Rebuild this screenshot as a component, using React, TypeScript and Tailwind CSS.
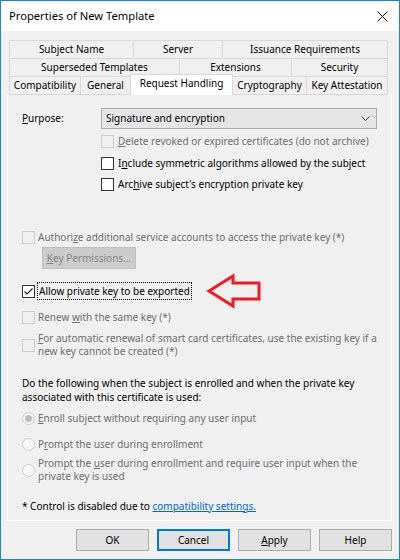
import React from 'react';

const font = { fontFamily: '"Noto Sans", "Open Sans", sans-serif' };

function Box({ disabled, checked }: { disabled?: boolean; checked?: boolean }) {
  return (
    <span
      className={`flex h-[13px] w-[13px] shrink-0 items-center justify-center border ${
        disabled ? 'border-[#cccccc] bg-[#f0f0f0]' : 'border-[#333333] bg-white'
      }`}
    >
      {checked && (
        <svg width="11" height="11" viewBox="0 0 11 11">
          <path d="M1.5 5.5 L4 8 L9.5 2.5" fill="none" stroke="#222" strokeWidth="1.2" />
        </svg>
      )}
    </span>
  );
}

function Radio({ selected }: { selected?: boolean }) {
  return (
    <span className="flex h-[13px] w-[13px] shrink-0 items-center justify-center rounded-full border border-[#cccccc] bg-[#f7f7f7]">
      {selected && <span className="h-[7px] w-[7px] rounded-full bg-[#bcbcbc]" />}
    </span>
  );
}

function Tab({ w, children, last }: { w: string; children: React.ReactNode; last?: boolean }) {
  return (
    <div
      className={`${w} flex h-[19px] items-center justify-center whitespace-nowrap border border-[#d9d9d9] bg-[#f0f0f0] ${
        last ? '' : '-mr-px'
      }`}
    >
      {children}
    </div>
  );
}

export default function App() {
  const dis = 'text-[#6d6d6d]';
  return (
    <div
      className="flex h-[560px] w-[400px] flex-col whitespace-nowrap border border-[#1883d7] bg-[#f0f0f0] text-[10px] text-black"
      style={font}
    >
      {/* title bar */}
      <div className="flex h-[30px] items-center justify-between bg-white pl-[8px] pr-[11px]">
        <span className="text-[11.2px]">Properties of New Template</span>
        <svg width="11" height="11" viewBox="0 0 11 11">
          <path d="M0.5 0.5 L10.5 10.5 M10.5 0.5 L0.5 10.5" stroke="#111" strokeWidth="1" />
        </svg>
      </div>

      <div className="flex flex-1 flex-col pl-[6px] pt-[9px]">
        {/* tabs */}
        <div className="ml-[2px] flex">
          <Tab w="w-[125px]">Subject Name</Tab>
          <Tab w="w-[90px]">Server</Tab>
          <Tab w="w-[166px]" last>Issuance Requirements</Tab>
        </div>
        <div className="-mt-px ml-[2px] flex">
          <Tab w="w-[171px]">Superseded Templates</Tab>
          <Tab w="w-[113px]">Extensions</Tab>
          <Tab w="w-[97px]" last>Security</Tab>
        </div>
        <div className="relative z-10 -mt-[3px] ml-[2px] flex items-end">
          <Tab w="w-[72px]">Compatibility</Tab>
          <Tab w="w-[51px]">General</Tab>
          <div className="-mr-px flex h-[21px] w-[103px] items-start justify-center border border-b-0 border-[#d9d9d9] bg-white pt-[1px]">
            Request Handling
          </div>
          <Tab w="w-[75px]">Cryptography</Tab>
          <Tab w="w-[82px]" last>Key Attestation</Tab>
        </div>

        {/* panel */}
        <div className="-mt-px flex h-[427px] w-[385px] flex-col border border-white pl-[14px]">
          <div className="mt-[13px] flex h-[21px] items-center">
            <span className="w-[79px]">
              <span className="underline">P</span>urpose:
            </span>
            <div className="flex h-[21px] w-[276px] items-center justify-between border border-[#adadad] bg-[#e5e5e5] pl-[4px] pr-[6px]">
              <span>Signature and encryption</span>
              <svg width="9" height="6" viewBox="0 0 9 6">
                <path d="M0.5 0.5 L4.5 4.5 L8.5 0.5" fill="none" stroke="#333" strokeWidth="1" />
              </svg>
            </div>
          </div>

          <div className="ml-[79px] mt-[2px] flex h-[20px] items-center gap-[4px]">
            <Box disabled />
            <span className={dis}>
              <span className="underline">D</span>elete revoked or expired certificates (do not archive)
            </span>
          </div>
          <div className="ml-[79px] mt-[2px] flex h-[20px] items-center gap-[4px]">
            <Box />
            <span>
              I<span className="underline">n</span>clude symmetric algorithms allowed by the subject
            </span>
          </div>
          <div className="ml-[79px] mt-[1px] flex h-[20px] items-center gap-[4px]">
            <Box />
            <span>
              Arc<span className="underline">h</span>ive subject's encryption private key
            </span>
          </div>

          <div className="mt-[33px] flex h-[20px] items-center gap-[3px]">
            <Box disabled />
            <span className={dis}>
              Authori<span className="underline">z</span>e additional service accounts to access the private key (*)
            </span>
          </div>
          <div className="ml-[20px] flex h-[22px] w-[94px] items-center justify-center border border-[#bfbfbf] bg-[#cccccc] text-[#838383]">
            <span>
              <span className="underline">K</span>ey Permissions...
            </span>
          </div>

          <div className="mt-[12px] flex h-[20px] items-center gap-[2px]">
            <Box checked />
            <span className="border border-dotted border-black px-[1px] leading-[16px]">Allow private key to be exported</span>
            <svg className="-my-[8px] ml-[12px]" width="56" height="36" viewBox="0 0 56 36">
              <path
                d="M3 18 L27 3 L27 10 L53 10 L53 26 L27 26 L27 33 Z"
                fill="none"
                stroke="#ed1c24"
                strokeWidth="3"
                strokeLinejoin="miter"
              />
            </svg>
          </div>

          <div className="mt-[6px] flex h-[20px] items-center gap-[3px]">
            <Box disabled />
            <span className={dis}>
              Renew <span className="underline">w</span>ith the same key (*)
            </span>
          </div>
          <div className="mt-[5px] flex items-center gap-[3px]">
            <Box disabled />
            <span className={`${dis} leading-[13px]`}>
              <span className="underline">F</span>or automatic renewal of smart card certificates, use the existing key if a
              <br />
              new key cannot be created (*)
            </span>
          </div>

          <p className="mt-[18px] leading-[14px]">
            Do the following when the subject is enrolled and when the private key
            <br />
            associated with this certificate is used:
          </p>

          <div className="mt-[4px] flex h-[20px] items-center gap-[3px]">
            <Radio selected />
            <span className={dis}>
              <span className="underline">E</span>nroll subject without requiring any user input
            </span>
          </div>
          <div className="mt-[6px] flex h-[20px] items-center gap-[3px]">
            <Radio />
            <span className={dis}>
              P<span className="underline">r</span>ompt the user during enrollment
            </span>
          </div>
          <div className="mt-[3px] flex items-center gap-[3px]">
            <Radio />
            <span className={`${dis} leading-[13px]`}>
              Prompt the <span className="underline">u</span>ser during enrollment and require user input when the
              <br />
              private key is used
            </span>
          </div>

          <div className="mt-[13px] flex h-[20px] items-center">
            <span>
              * Control is disabled due to{' '}
              <span className="text-[#0066cc] underline">compatibility settings.</span>
            </span>
          </div>
        </div>

        {/* buttons */}
        <div className="mt-[8px] flex gap-[8px] pl-[69px]">
          <button className="h-[22px] w-[73px] border border-[#adadad] bg-[#e1e1e1]">OK</button>
          <button className="h-[22px] w-[73px] border-2 border-[#0078d7] bg-[#e1e1e1]">Cancel</button>
          <button className="h-[22px] w-[73px] border border-[#adadad] bg-[#e1e1e1]">
            <span className="underline">A</span>pply
          </button>
          <button className="h-[22px] w-[73px] border border-[#adadad] bg-[#e1e1e1]">Help</button>
        </div>
      </div>
    </div>
  );
}
